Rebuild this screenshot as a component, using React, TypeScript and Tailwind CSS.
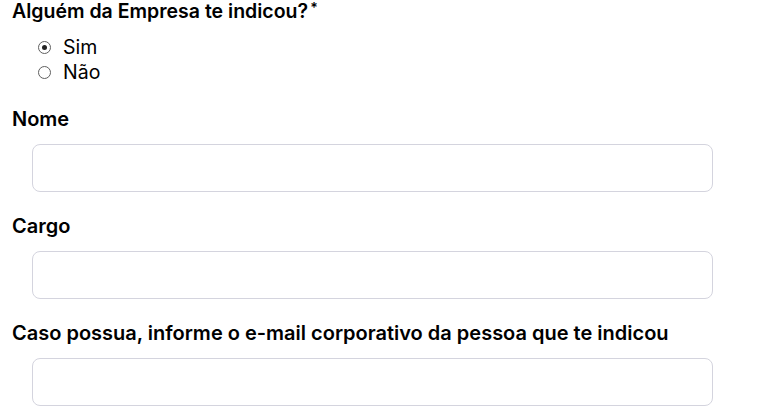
export default function App() {
  return (
    <div className="min-h-screen bg-white pl-3 pr-[51px] text-black font-['Inter','Liberation_Sans',sans-serif]">
      {/* Indicação */}
      <div>
        <div className="text-[19.5px] leading-[22px] font-semibold">
          Alguém da Empresa te indicou?
          <span className="relative top-[-5px] ml-[2px] text-[14px] leading-none">*</span>
        </div>
        <div className="mt-[13px] pl-[26px] flex flex-col">
          <label className="flex items-center gap-[12px] text-[19.5px] leading-[25px]">
            <span className="w-[13px] h-[13px] rounded-full border border-[#5f5f5f] flex items-center justify-center">
              <span className="w-[5px] h-[5px] rounded-full bg-[#222]" />
            </span>
            Sim
          </label>
          <label className="flex items-center gap-[12px] text-[19.5px] leading-[25px]">
            <span className="w-[13px] h-[13px] rounded-full border border-[#5f5f5f]" />
            Não
          </label>
        </div>
      </div>

      <Field label="Nome" className="mt-5" />
      <Field label="Cargo" className="mt-5" />
      <Field label="Caso possua, informe o e-mail corporativo da pessoa que te indicou" className="mt-5" />
    </div>
  );
}

function Field({ label, className = '' }: { label: string; className?: string }) {
  return (
    <div className={className}>
      <label className="block text-[20px] leading-[28px] font-semibold">{label}</label>
      <input
        type="text"
        className="mt-[11px] ml-5 block w-[681px] h-12 rounded-lg border border-[#d4d4de] bg-white px-3 outline-none"
      />
    </div>
  );
}
